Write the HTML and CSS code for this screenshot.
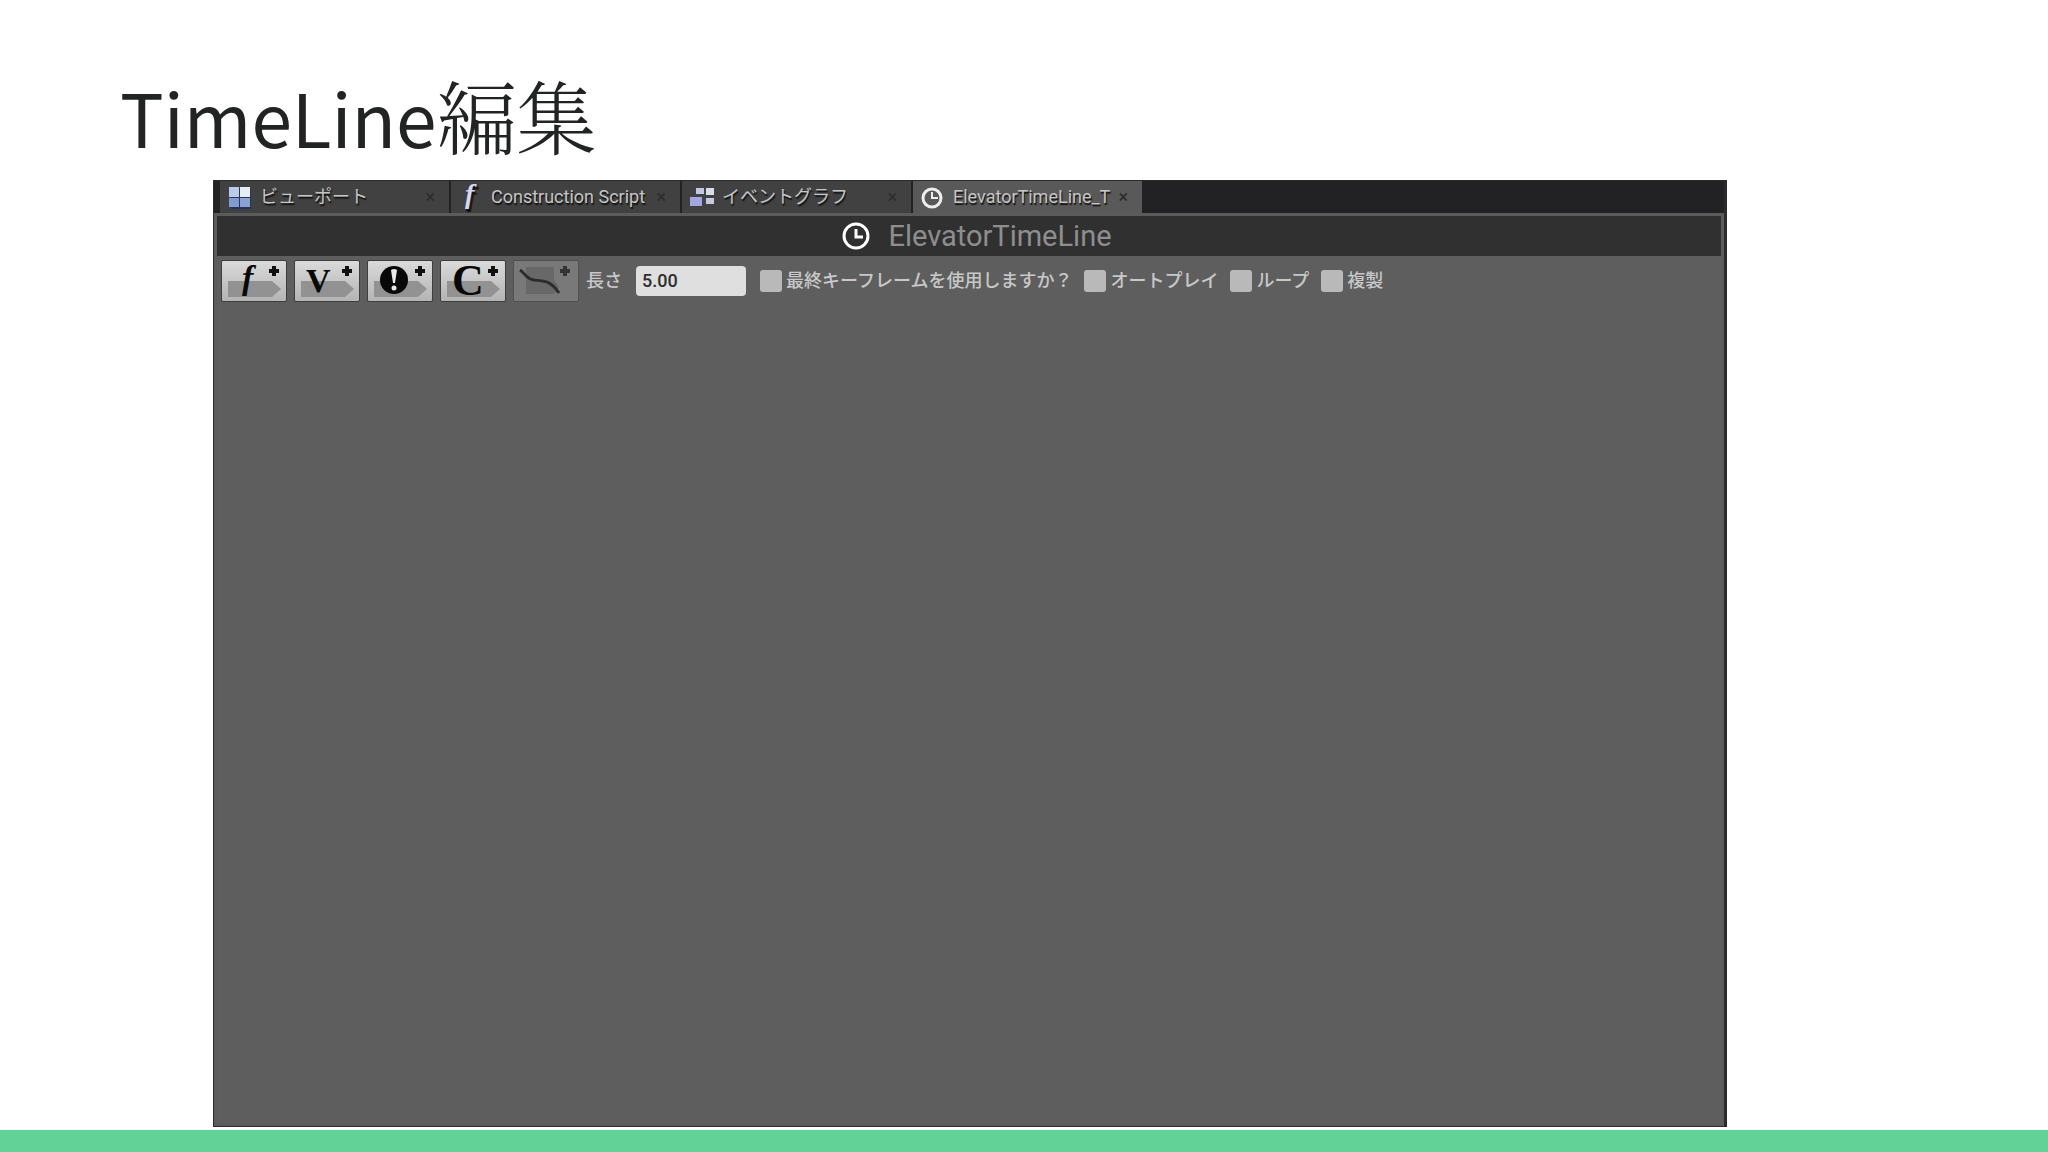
FILE: index.html
```html
<!DOCTYPE html>
<html lang="ja">
<head>
    <meta charset="UTF-8">
    <meta name="viewport" content="width=device-width, initial-scale=1.0">
    <title>TimeLine編集</title>
    <link rel="stylesheet" href="styles.css">
</head>
<body>
    <h1 class="slide-title">TimeLine<span class="mincho">編集</span></h1>

    <main class="editor">
        <nav class="tabs">
            <a class="tab" href="#viewport">
                <svg class="tab-icon" viewBox="0 0 24 24">
                    <path d="M3 4h20v20H3z" fill="#26345c"/>
                    <path d="M1 2h10v10H1z" fill="#b9cbe8"/>
                    <path d="M12 2h10v10H12z" fill="#e4eef2"/>
                    <path d="M1 13h10v9H1z" fill="#7f9bd0"/>
                    <path d="M12 13h10v9H12z" fill="#8ba4cf"/>
                </svg>
                <span class="tab-name">ビューポート</span>
                <span class="tab-close">×</span>
            </a>
            <a class="tab" href="#construction">
                <svg class="tab-icon" viewBox="0 0 24 24">
                    <text class="fn-shadow" x="7" y="19">f</text>
                    <text class="fn" x="6" y="18">f</text>
                </svg>
                <span class="tab-name">Construction Script</span>
                <span class="tab-close">×</span>
            </a>
            <a class="tab" href="#event-graph">
                <svg class="tab-icon" viewBox="0 0 24 24">
                    <path d="M6 3h8v6H6z" fill="#c3c8dc"/>
                    <path d="M16 3h8v7h-8z" fill="#dadce8"/>
                    <path d="M0 12h12v9H0z" fill="#a3a7e0"/>
                    <path d="M16 13h8v6h-8z" fill="#c5cbdc"/>
                    <path d="M12 15h4M8 9v3" stroke="#3c426e" stroke-width="2"/>
                </svg>
                <span class="tab-name">イベントグラフ</span>
                <span class="tab-close">×</span>
            </a>
            <a class="tab active" href="#timeline">
                <svg class="tab-icon" viewBox="0 0 24 24">
                    <circle cx="11" cy="13" r="9" fill="none" stroke="#eee" stroke-width="3"/>
                    <path d="M11 7v6h6" fill="none" stroke="#eee" stroke-width="2"/>
                </svg>
                <span class="tab-name">ElevatorTimeLine_T</span>
                <span class="tab-close">×</span>
            </a>
        </nav>

        <section class="timeline">
            <h2 class="timeline-name">
                <svg class="clock" viewBox="0 0 28 28">
                    <circle cx="14" cy="14" r="12" fill="none" stroke="#fff" stroke-width="3"/>
                    <path d="M14 7v8h7" fill="none" stroke="#fff" stroke-width="3"/>
                </svg>
                ElevatorTimeLine
            </h2>

            <div class="toolbar">
                <button class="track-btn" aria-label="Float">
                    <svg viewBox="0 0 64 40">
                        <path class="tag" d="M6 20h44l9 8-9 8H6z"/>
                        <text class="glyph italic" x="20" y="28">f</text>
                        <path class="plus" d="M52 5v10M47 10h10"/>
                    </svg>
                </button>
                <button class="track-btn" aria-label="Vector">
                    <svg viewBox="0 0 64 40">
                        <path class="tag" d="M6 20h44l9 8-9 8H6z"/>
                        <text class="glyph vector" x="11" y="31">V</text>
                        <path class="plus" d="M52 5v10M47 10h10"/>
                    </svg>
                </button>
                <button class="track-btn" aria-label="Event">
                    <svg viewBox="0 0 64 40">
                        <path class="tag" d="M6 20h44l9 8-9 8H6z"/>
                        <circle cx="26" cy="19" r="14" fill="#080808"/>
                        <path d="M23 9q3-2 6 0l-2 13h-2z" fill="#e8e8e8"/>
                        <circle cx="26" cy="27" r="2.5" fill="#e8e8e8"/>
                        <path class="plus" d="M52 5v10M47 10h10"/>
                    </svg>
                </button>
                <button class="track-btn" aria-label="Color">
                    <svg viewBox="0 0 64 40">
                        <path class="tag" d="M6 20h44l9 8-9 8H6z"/>
                        <text class="glyph color" x="11" y="34">C</text>
                        <path class="plus" d="M52 5v10M47 10h10"/>
                    </svg>
                </button>
                <button class="track-btn" aria-label="Curve" disabled>
                    <svg viewBox="0 0 64 40">
                        <path class="tag" d="M12 6h28v13l5 7-5 7H12z"/>
                        <path d="M6 9c5 3 6 9 14 10c11 1 17 1 25 13" fill="none" stroke="#2c2c2c" stroke-width="3"/>
                        <path class="plus" d="M51 5v10M46 10h10"/>
                    </svg>
                </button>

                <label class="length-label" for="length">長さ</label>
                <input class="length" id="length" type="text" value="5.00">

                <label class="check"><input type="checkbox">最終キーフレームを使用しますか？</label>
                <label class="check"><input type="checkbox">オートプレイ</label>
                <label class="check"><input type="checkbox">ループ</label>
                <label class="check"><input type="checkbox">複製</label>
            </div>
        </section>
    </main>

    <footer class="slide-bar"></footer>
</body>
</html>
```
FILE: styles.css
```css
* {
    box-sizing: border-box;
}
body {
    margin: 0;
    min-height: 100vh;
    display: flex;
    flex-direction: column;
    background-color: #fff;
    font-family: Roboto, "Noto Sans CJK JP", sans-serif;
}
.slide-title {
    margin: 0;
    padding: 60px 120px 0;
    height: 180px;
    font-family: "Noto Sans CJK JP", sans-serif;
    font-size: 73px;
    font-weight: 400;
    line-height: 108px;
    color: #212423;
}
.mincho {
    font-family: "Noto Serif CJK JP", "Noto Sans CJK JP", serif;
    font-size: 80px;
    font-weight: 300;
}

/* エディタ本体 */
.editor {
    flex: 1;
    display: flex;
    flex-direction: column;
    margin: 0 321px 3px 213px;
    border: 1px solid #2b2b2c;
    border-right-width: 3px;
    background-color: #222224;
}
.tabs {
    display: flex;
    gap: 2px;
    padding-left: 6px;
}
.tab {
    display: flex;
    align-items: center;
    width: 229px;
    height: 32px;
    padding: 0 14px 0 8px;
    background-color: #414142;
    color: #c4c4c4;
    font-size: 18px;
    line-height: 30px;
    text-decoration: none;
    text-shadow: 1px 2px 1px #111;
}
.tab.active {
    background-color: #59595a;
}
.tab-icon {
    flex: none;
    width: 24px;
    height: 24px;
    margin-right: 8px;
    overflow: visible;
}
.fn,
.fn-shadow {
    font: italic bold 28px "Liberation Serif", serif;
    fill: #d6d8ee;
}
.fn-shadow {
    fill: #32407c;
}
.tab-name {
    flex: 1;
    overflow: hidden;
    white-space: nowrap;
}
.tab-close {
    width: 16px;
    text-align: right;
    color: #2c2c2c;
    text-shadow: none;
}

.timeline {
    flex: 1;
    border: 3px solid #5b5b5c;
    background-color: #5e5e5f;
}
.timeline-name {
    display: flex;
    align-items: center;
    justify-content: center;
    gap: 18px;
    height: 40px;
    margin: 0;
    padding-left: 16px;
    background-color: #303031;
    color: #8e8e8e;
    font-size: 29px;
    font-weight: 400;
}
.clock {
    width: 28px;
    height: 28px;
}

/* ツールバー */
.toolbar {
    display: flex;
    align-items: center;
    padding: 4px;
    color: #c8c8c8;
    font-size: 18px;
    font-weight: 500;
    line-height: 30px;
}
.track-btn {
    width: 66px;
    height: 42px;
    margin-right: 7px;
    padding: 0;
    border: 1px solid #3e3e3e;
    border-radius: 2px;
    background: linear-gradient(#dadada, #b4b4b4);
}
.track-btn svg {
    display: block;
    width: 64px;
    height: 40px;
    overflow: visible;
}
.track-btn:disabled {
    border-color: #505050;
    background: #797979;
}
.tag {
    fill: #929292;
}
.track-btn:disabled .tag {
    fill: #686868;
}
.plus {
    stroke: #111;
    stroke-width: 4;
}
.track-btn:disabled .plus {
    stroke: #333;
}
.glyph {
    font-family: "Liberation Serif", serif;
    font-weight: bold;
    fill: #080808;
}
.italic {
    font-size: 34px;
    font-style: italic;
}
.vector {
    font-size: 34px;
}
.color {
    font-size: 44px;
}
.length {
    width: 110px;
    height: 30px;
    margin: 0 14px;
    padding: 0 6px 2px;
    border: 0;
    border-radius: 4px;
    background-color: #dfdfdf;
    color: #2e2e2e;
    font: 500 18px Roboto, sans-serif;
}
.check {
    display: flex;
    align-items: center;
    margin-right: 12px;
}
.check input {
    appearance: none;
    width: 22px;
    height: 22px;
    margin: 0 4px 0 0;
    border-radius: 3px;
    background-color: #b9b9ba;
}
.check input:checked {
    background-color: #e0902c;
}

.slide-bar {
    height: 22px;
    background-color: #63d297;
}
```
